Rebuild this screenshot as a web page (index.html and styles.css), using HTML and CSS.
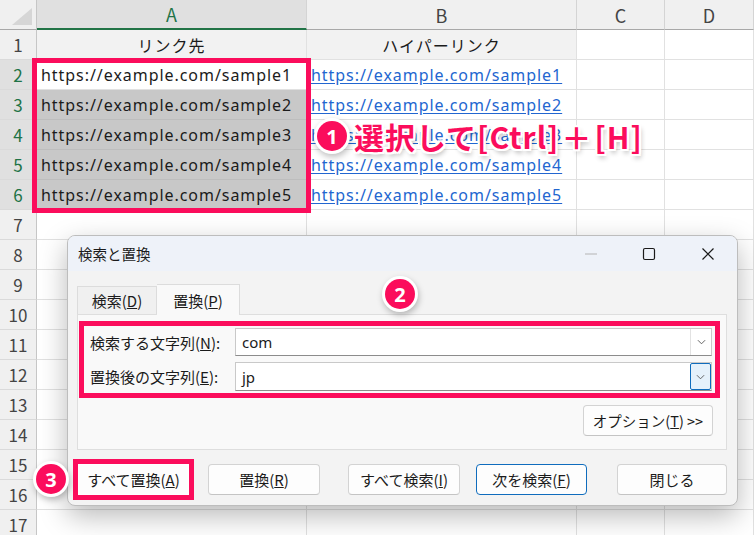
FILE: index.html
```html
<!DOCTYPE html>
<html lang="ja">
<head>
    <meta charset="UTF-8">
    <title>検索と置換</title>
    <link rel="stylesheet" href="styles.css">
</head>
<body>
    <div class="page">
        <!-- Spreadsheet -->
        <div class="grid">
            <div class="corner"></div>
            <div class="col-head sel">A</div>
            <div class="col-head">B</div>
            <div class="col-head">C</div>
            <div class="col-head">D</div>

            <div class="row-head">1</div>
            <div class="cell head-cell">リンク先</div>
            <div class="cell head-cell">ハイパーリンク</div>
            <div class="cell"></div><div class="cell"></div>

            <div class="row-head sel">2</div>
            <div class="cell url active">https://example.com/sample1</div>
            <div class="cell"><a href="#" class="link">https://example.com/sample1</a></div>
            <div class="cell"></div><div class="cell"></div>

            <div class="row-head sel">3</div>
            <div class="cell url picked">https://example.com/sample2</div>
            <div class="cell"><a href="#" class="link">https://example.com/sample2</a></div>
            <div class="cell"></div><div class="cell"></div>

            <div class="row-head sel">4</div>
            <div class="cell url picked">https://example.com/sample3</div>
            <div class="cell"><a href="#" class="link">https://example.com/sample3</a></div>
            <div class="cell"></div><div class="cell"></div>

            <div class="row-head sel">5</div>
            <div class="cell url picked">https://example.com/sample4</div>
            <div class="cell"><a href="#" class="link">https://example.com/sample4</a></div>
            <div class="cell"></div><div class="cell"></div>

            <div class="row-head sel">6</div>
            <div class="cell url picked">https://example.com/sample5</div>
            <div class="cell"><a href="#" class="link">https://example.com/sample5</a></div>
            <div class="cell"></div><div class="cell"></div>

            <div class="row-head">7</div><div class="cell"></div><div class="cell"></div><div class="cell"></div><div class="cell"></div>
            <div class="row-head">8</div><div class="cell"></div><div class="cell"></div><div class="cell"></div><div class="cell"></div>
            <div class="row-head">9</div><div class="cell"></div><div class="cell"></div><div class="cell"></div><div class="cell"></div>
            <div class="row-head">10</div><div class="cell"></div><div class="cell"></div><div class="cell"></div><div class="cell"></div>
            <div class="row-head">11</div><div class="cell"></div><div class="cell"></div><div class="cell"></div><div class="cell"></div>
            <div class="row-head">12</div><div class="cell"></div><div class="cell"></div><div class="cell"></div><div class="cell"></div>
            <div class="row-head">13</div><div class="cell"></div><div class="cell"></div><div class="cell"></div><div class="cell"></div>
            <div class="row-head">14</div><div class="cell"></div><div class="cell"></div><div class="cell"></div><div class="cell"></div>
            <div class="row-head">15</div><div class="cell"></div><div class="cell"></div><div class="cell"></div><div class="cell"></div>
            <div class="row-head">16</div><div class="cell"></div><div class="cell"></div><div class="cell"></div><div class="cell"></div>
            <div class="row-head">17</div><div class="cell"></div><div class="cell"></div><div class="cell"></div><div class="cell"></div>
        </div>

        <!-- Annotations -->
        <div class="range-box"></div>
        <div class="callout callout-1">
            <span class="badge">1</span>
            <span class="callout-text">選択して[Ctrl]<span class="plus">＋</span>[H]</span>
        </div>
        <span class="badge badge-2">2</span>
        <span class="badge badge-3">3</span>

        <!-- Find & Replace dialog -->
        <div class="dialog">
            <div class="titlebar">
                <span class="title">検索と置換</span>
                <div class="win-controls">
                    <svg class="ctl-min" viewBox="0 0 14 14"><path d="M1 7h12" stroke="#b4b4b4" stroke-width="1"/></svg>
                    <svg class="ctl-max" viewBox="0 0 14 14"><rect x="1.5" y="1.5" width="11" height="11" rx="1.5" fill="none" stroke="#1a1a1a" stroke-width="1.2"/></svg>
                    <svg class="ctl-close" viewBox="0 0 14 14"><path d="M1.5 1.5l11 11M12.5 1.5l-11 11" stroke="#1a1a1a" stroke-width="1.2"/></svg>
                </div>
            </div>
            <div class="dlg-body">
                <div class="tabs">
                    <div class="tab">検索(<u>D</u>)</div>
                    <div class="tab active">置換(<u>P</u>)</div>
                </div>
                <div class="panel">
                    <div class="fields">
                        <div class="field">
                            <label>検索する文字列(<u>N</u>):</label>
                            <div class="combo">
                                <span class="combo-value">com</span>
                                <span class="drop"><svg viewBox="0 0 10 6"><path d="M1 1l4 4 4-4" fill="none" stroke="#555" stroke-width="1"/></svg></span>
                            </div>
                        </div>
                        <div class="field">
                            <label>置換後の文字列(<u>E</u>):</label>
                            <div class="combo">
                                <span class="combo-value">jp</span>
                                <span class="drop focus"><svg viewBox="0 0 10 6"><path d="M1 1l4 4 4-4" fill="none" stroke="#555" stroke-width="1"/></svg></span>
                            </div>
                        </div>
                    </div>
                    <div class="opt-row">
                        <button class="btn btn-opt">オプション(<u>T</u>) &gt;&gt;</button>
                    </div>
                </div>
                <div class="actions">
                    <button class="btn btn-all">すべて置換(<u>A</u>)</button>
                    <button class="btn btn-rep">置換(<u>R</u>)</button>
                    <button class="btn btn-findall">すべて検索(<u>I</u>)</button>
                    <button class="btn btn-next">次を検索(<u>F</u>)</button>
                    <button class="btn btn-close">閉じる</button>
                </div>
            </div>
        </div>
    </div>
</body>
</html>
```

FILE: styles.css
```css
* {
    margin: 0;
    padding: 0;
    box-sizing: border-box;
}

body {
    width: 754px;
    height: 535px;
    overflow: hidden;
    background: #fff;
    font-family: "Noto Sans CJK JP", sans-serif;
    color: #1b1b1b;
}

.page {
    position: relative;
    width: 754px;
    height: 535px;
    overflow: hidden;
}

/* Spreadsheet grid */
.grid {
    display: grid;
    grid-template-columns: 37px 270px 270px 88px 89px;
    grid-auto-rows: 30px;
}

.corner {
    background: #f0f0f0;
    border-right: 1px solid #c6c6c6;
    border-bottom: 1px solid #a8a8a8;
    position: relative;
}

.corner::after {
    content: '';
    position: absolute;
    right: 4px;
    bottom: 4px;
    width: 20px;
    height: 17px;
    background: #d6d6d6;
    clip-path: polygon(100% 0, 100% 100%, 0 100%);
}

.col-head {
    background: #f0f0f0;
    border-right: 1px solid #d4d4d4;
    border-bottom: 1px solid #a8a8a8;
    display: flex;
    justify-content: center;
    align-items: center;
    font-family: "Noto Sans CJK JP", sans-serif;
    font-size: 18px;
    color: #444;
}

.col-head.sel {
    background: #e0e0e0;
    color: #217346;
    border-bottom: 2px solid #217346;
}

.row-head {
    background: #f0f0f0;
    border-right: 1px solid #c6c6c6;
    border-bottom: 1px solid #dadada;
    display: flex;
    justify-content: center;
    align-items: center;
    font-size: 17px;
    color: #444;
}

.row-head.sel {
    background: #e0e0e0;
    color: #217346;
}

.cell {
    border-right: 1px solid #e1e1e1;
    border-bottom: 1px solid #e1e1e1;
    display: flex;
    align-items: center;
    padding-left: 4px;
    font-family: "Noto Sans", "Noto Sans CJK JP", sans-serif;
    font-size: 16px;
    letter-spacing: 0.95px;
    white-space: nowrap;
    overflow: hidden;
}

.cell.head-cell {
    background: #f2f2f2;
    justify-content: center;
    font-family: "Noto Sans CJK JP", sans-serif;
    letter-spacing: 1px;
    padding-left: 0;
}

.cell.url {
    color: #1b1b1b;
}

.cell.active {
    background: #fff;
}

.cell.picked {
    background: #c8c8c8;
    border-right-color: #c8c8c8;
    border-bottom-color: #bdbdbd;
}

.link {
    color: #2266d0;
    text-decoration: underline;
    text-underline-offset: 2px;
}

/* Annotations */
.range-box {
    position: absolute;
    left: 32px;
    top: 58px;
    width: 279px;
    height: 155px;
    border: 5px solid #fb0d5c;
}

.badge {
    position: absolute;
    width: 30px;
    height: 30px;
    border-radius: 50%;
    background: #fb0d5c;
    color: #fff;
    font-family: "Noto Sans", sans-serif;
    font-weight: 700;
    font-size: 20px;
    display: flex;
    justify-content: center;
    align-items: center;
    box-shadow: 0 0 0 3px #fff, 1px 3px 6px 3px rgba(0, 0, 0, 0.25);
}

.callout {
    position: absolute;
    left: 317px;
    top: 116px;
    display: flex;
    align-items: center;
    gap: 7px;
}

.callout .badge {
    position: static;
}

.callout-text {
    font-family: "Noto Sans CJK JP", sans-serif;
    font-weight: 700;
    font-size: 30px;
    line-height: 40px;
    color: #fb0d5c;
    letter-spacing: 1px;
    text-shadow:
        -2px -2px 0 #fff, 2px -2px 0 #fff, -2px 2px 0 #fff, 2px 2px 0 #fff,
        0 -2px 0 #fff, 0 2px 0 #fff, -2px 0 0 #fff, 2px 0 0 #fff,
        2px 4px 5px rgba(0, 0, 0, 0.3);
}

.callout-text .plus {
    margin: 0 2px;
}

.badge-2 {
    left: 385px;
    top: 279px;
    z-index: 2;
}

.badge-3 {
    left: 36px;
    top: 464px;
    z-index: 2;
}

/* Dialog */
.dialog {
    position: absolute;
    left: 67px;
    top: 235px;
    width: 671px;
    height: 271px;
    border: 1px solid #bdbdbd;
    border-radius: 8px;
    background: #f3f3f3;
    overflow: hidden;
    box-shadow: 0 10px 28px rgba(0, 0, 0, 0.28);
    font-size: 15px;
}

.titlebar {
    height: 35px;
    background: #eef2f9;
    display: flex;
    align-items: center;
    justify-content: space-between;
    padding-left: 10px;
}

.title {
    font-size: 14.5px;
    color: #1b1b1b;
}

.win-controls {
    display: flex;
    align-items: center;
    height: 100%;
}

.win-controls svg {
    width: 14px;
    height: 14px;
}

.ctl-min { margin-right: 44px; }
.ctl-max { margin-right: 45px; }
.ctl-close { margin-right: 22px; }

.dlg-body {
    padding: 12px 10px 0 9px;
}

.tabs {
    display: flex;
    align-items: flex-end;
    height: 31px;
}

.tab {
    height: 28px;
    display: flex;
    align-items: center;
    border: 1px solid #dcdcdc;
    border-bottom: none;
    background: #f0f0f0;
    width: 80px;
    justify-content: center;
}

.tab.active {
    height: 31px;
    width: 83px;
    background: #f9f9f9;
    border-left: none;
    position: relative;
    top: 1px;
}

.panel {
    background: #f9f9f9;
    border: 1px solid #dedede;
    height: 136px;
    padding: 6px 13px 0 1px;
}

.fields {
    border: 5px solid #fb0d5c;
    padding: 2px 3px 2px 6px;
    margin-right: -7px;
    display: flex;
    flex-direction: column;
    gap: 6px;
}

.field {
    display: flex;
    align-items: center;
}

.field label {
    width: 145px;
    font-size: 15px;
    color: #1b1b1b;
}

.combo {
    flex: 1;
    height: 28px;
    background: #fff;
    border: 1px solid #c9c9c9;
    border-bottom-color: #8c8c8c;
    display: flex;
    align-items: center;
    justify-content: space-between;
}

.field + .field .combo {
    height: 29px;
}

.combo-value {
    padding-left: 6px;
    font-family: "Noto Sans", sans-serif;
    font-size: 15px;
    color: #1b1b1b;
}

.drop {
    width: 21px;
    height: 100%;
    border-left: 1px solid #e2e2e2;
    display: flex;
    justify-content: center;
    align-items: center;
}

.drop.focus {
    border: 1px solid #0f6cbd;
    border-radius: 2px;
    background: #e5f1fb;
}

.drop svg {
    width: 9px;
    height: 6px;
}

.opt-row {
    display: flex;
    justify-content: flex-end;
    margin-top: 7px;
}

.btn {
    font-family: "Noto Sans CJK JP", sans-serif;
    font-size: 15px;
    color: #1b1b1b;
    height: 31px;
    width: 111px;
    background: #fdfdfd;
    border: 1px solid #d3d3d3;
    border-bottom-color: #c4c4c4;
    border-radius: 4px;
}

.btn-opt {
    width: 130px;
    font-size: 14.5px;
}

.actions {
    display: flex;
    margin-top: 14px;
}

.btn-all {
    margin-left: 1px;
    border-radius: 0;
    border-color: #fff;
    outline: 5px solid #fb0d5c;
}

.btn-rep { margin-left: 19px; width: 112px; }
.btn-findall { margin-left: 28px; width: 112px; }
.btn-next {
    margin-left: 16px;
    border: 1px solid #0f6cbd;
}
.btn-close { margin-left: 30px; width: 110px; }
```
